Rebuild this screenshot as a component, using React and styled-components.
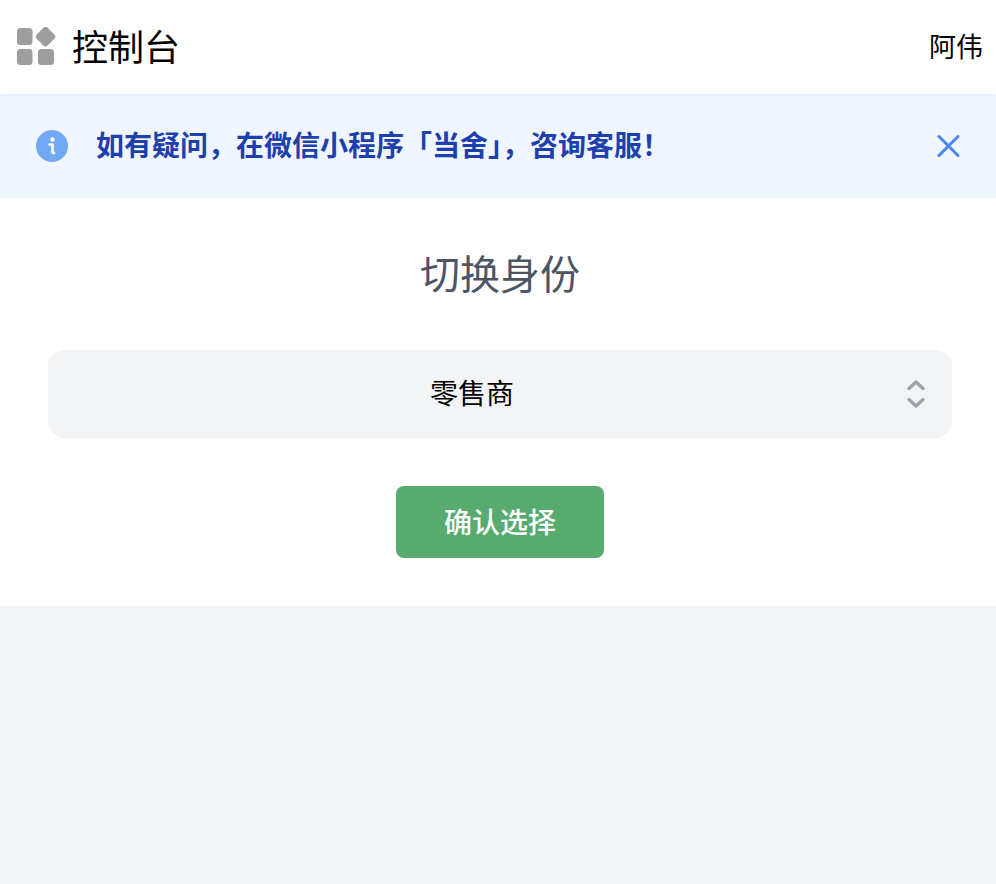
import React from 'react';
import styled, { createGlobalStyle } from 'styled-components';

const CJK = '"Noto Sans CJK SC", "Liberation Sans", sans-serif';

function App() {
  return (
    <>
      <GlobalStyle />
      <Header>
        <Brand>
          <svg width="40" height="40" viewBox="0 0 40 40">
            <rect x="1" y="1" width="15.500" height="17" rx="3.500" fill="#9e9e9e" />
            <rect x="21.800" y="1.800" width="15.500" height="15.500" rx="3" fill="#9e9e9e" transform="rotate(45 29.500 9.500)" />
            <rect x="1" y="22" width="15.500" height="16" rx="3.500" fill="#9e9e9e" />
            <rect x="22" y="22" width="16" height="16" rx="3.500" fill="#9e9e9e" />
          </svg>
          <BrandTitle>控制台</BrandTitle>
        </Brand>
        <UserName>阿伟</UserName>
      </Header>
      <Notice>
        <NoticeLeft>
          <svg width="32" height="32" viewBox="0 0 32 32">
            <circle cx="16" cy="16" r="16" fill="#73a8f5" />
            <circle cx="16.500" cy="9.500" r="2.200" fill="#fff" />
            <path d="M13.500 14.500h3v7.500q0 1 1.500 1" fill="none" stroke="#fff" strokeWidth="2.600" strokeLinecap="round" strokeLinejoin="round" />
          </svg>
          <NoticeText>如有疑问，在微信小程序「当舍」，咨询客服！</NoticeText>
        </NoticeLeft>
        <svg width="24" height="24" viewBox="0 0 24 24">
          <path d="M3 2.500L22 21.500M22 2.500L3 21.500" fill="none" stroke="#4a86f0" strokeWidth="3" strokeLinecap="round" />
        </svg>
      </Notice>
      <Panel>
        <PanelTitle>切换身份</PanelTitle>
        <RoleSelect>
          <RoleValue>零售商</RoleValue>
          <svg width="20" height="32" viewBox="0 0 20 32">
            <path d="M3 10.500L10 4L17 10.500M3 21.500L10 28L17 21.500" fill="none" stroke="#9ca3af" strokeWidth="3.400" strokeLinecap="round" strokeLinejoin="round" />
          </svg>
        </RoleSelect>
        <ConfirmButton>确认选择</ConfirmButton>
      </Panel>
    </>
  );
}

export default App;

const GlobalStyle = createGlobalStyle`
  html, body {
    margin: 0;
    min-height: 884px;
    background: #f3f4f6;
    font-family: ${CJK};
  }
`;

const Header = styled.header`
  display: flex;
  align-items: center;
  justify-content: space-between;
  height: 94px;
  padding: 0 13px 0 16px;
  background: #fff;
  box-shadow: 0 1px 3px rgba(0, 0, 0, 0.06);
  position: relative;
`;

const Brand = styled.div`
  display: flex;
  align-items: center;
  gap: 16px;
`;

const BrandTitle = styled.h1`
  margin: 0 0 4px;
  font-size: 36px;
  font-weight: 400;
  color: #000;
`;

const UserName = styled.div`
  margin-bottom: 4px;
  font-size: 27px;
  color: #000;
`;

const Notice = styled.div`
  display: flex;
  align-items: center;
  justify-content: space-between;
  height: 104px;
  padding: 0 36px;
  background: #eff6ff;
`;

const NoticeLeft = styled.div`
  display: flex;
  align-items: center;
  gap: 28px;
`;

const NoticeText = styled.p`
  margin: 0 0 4px;
  font-size: 28px;
  font-weight: 700;
  color: #1e40af;
`;

const Panel = styled.main`
  display: flex;
  flex-direction: column;
  align-items: center;
  height: 408px;
  padding: 48px 44px 0 48px;
  box-sizing: border-box;
  background: #fff;
`;

const PanelTitle = styled.h2`
  margin: 0 0 52px;
  font-size: 40px;
  line-height: 52px;
  font-weight: 400;
  color: #4b5563;
`;

const RoleSelect = styled.div`
  display: flex;
  align-items: center;
  gap: 10px;
  width: 100%;
  height: 88px;
  padding: 0 26px 0 0;
  box-sizing: border-box;
  border-radius: 16px;
  background: #f3f4f6;
`;

const RoleValue = styled.div`
  flex: 1;
  margin-bottom: 4px;
  text-align: center;
  font-size: 28px;
  color: #000;
`;

const ConfirmButton = styled.button`
  width: 208px;
  height: 72px;
  margin-top: 48px;
  padding: 0 0 2px;
  border: 0;
  border-radius: 8px;
  background: #57ab6f;
  color: #fff;
  font-family: ${CJK};
  font-size: 28px;
  font-weight: 500;
`;
